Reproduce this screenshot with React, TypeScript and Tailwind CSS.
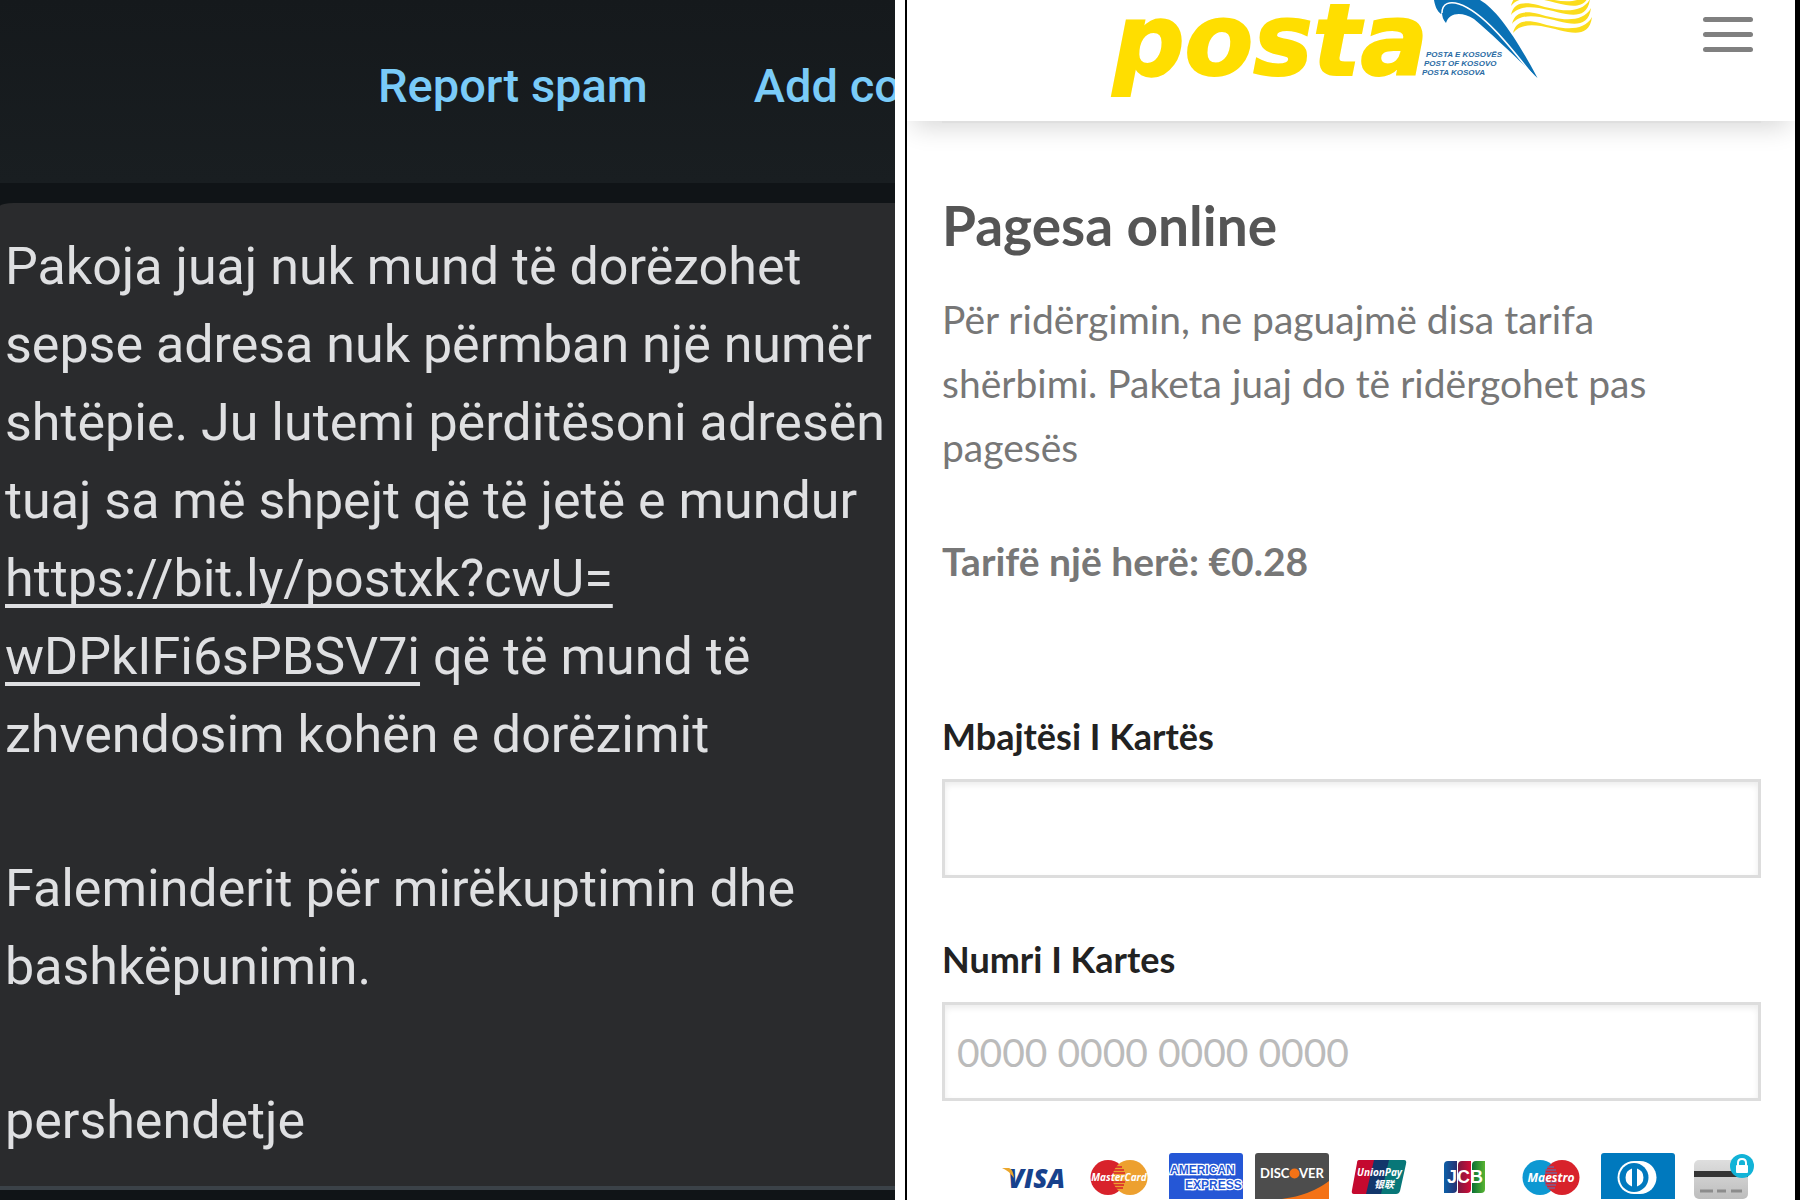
import type { ReactNode } from "react";

const lato = "font-['Lato',sans-serif]";

function PostaLogo() {
  const stripe =
    "M434 33C437 20 447 20 461 23C478 28 504 34 513 17C511 33 500 34 489 32C472 29 446 18 434 33Z";
  return (
    <svg viewBox="28 0 488 98" className="h-[98px] w-[488px]" role="img" aria-label="Posta e Kosovës">
      <text x="34" y="75" fontFamily="DejaVu Sans" fontSize="100" fontWeight="700" fontStyle="italic" fill="#ffde00" stroke="#ffde00" strokeWidth="2">
        posta
      </text>
      <g fontFamily="Liberation Sans" fontSize="8" fontWeight="700" fontStyle="italic" fill="#2a6ba3">
        <text x="347" y="57">POSTA E KOSOVËS</text>
        <text x="345" y="66">POST OF KOSOVO</text>
        <text x="343" y="75">POSTA KOSOVA</text>
      </g>
      <path d="M355 0H401C418 10 436 36 458.500 78C444 64 415 36 395 19C382 11 370 13 367 23C364 20 363 16 363 12L362 14C358 11 356 6 355 0Z" fill="#0a71b5" />
      <path d="M363 13C363 3 371 1 380 4C404 12 430 45 456 78" fill="none" stroke="#fff" strokeWidth="1.500" />
      <g fill="#fbdc1c">
        <path d={stripe} />
        <path d={stripe} transform="translate(-1 -9)" />
        <path d={stripe} transform="translate(-2 -18)" />
        <path d={stripe} transform="translate(-2 -27)" />
      </g>
    </svg>
  );
}

function Badge({ label, children }: { label: string; children: ReactNode }) {
  return (
    <li>
      <svg viewBox="0 0 74 46" className="block h-[46px] w-[74px]" role="img" aria-label={label}>
        {children}
      </svg>
    </li>
  );
}

function CardBadges() {
  const humanist = "Open Sans";
  return (
    <ul className="ml-auto flex w-[765px] max-w-full justify-between">
      <Badge label="Visa">
        <text x="12" y="35" fontFamily={humanist} fontSize="26" fontWeight="800" fontStyle="italic" fill="#17418c">VISA</text>
        <path d="M6 15H13Q17 16 18 25Q12 17 6 15Z" fill="#eba72c" />
      </Badge>
      <Badge label="MasterCard">
        <circle cx="26" cy="24.500" r="17.500" fill="#d8222b" />
        <circle cx="48" cy="24.500" r="17.500" fill="#eda02f" />
        <path d="M32 14H40M31 17H42M31 20H43M31 29H43M31 32H42M33 35H41" stroke="#d8222b" strokeWidth="1.500" />
        <text x="37" y="28" textAnchor="middle" fontFamily={humanist} fontSize="10" fontWeight="700" fontStyle="italic" fill="#fff">MasterCard</text>
      </Badge>
      <Badge label="American Express">
        <rect width="74" height="52" rx="3" fill="#2557d6" />
        <g fontFamily="Liberation Sans" fontSize="12" fontWeight="700" fill="#2557d6" stroke="#fff" strokeWidth="2.500" paintOrder="stroke">
          <text x="1" y="21">AMERICAN</text>
          <text x="16" y="36">EXPRESS</text>
        </g>
      </Badge>
      <Badge label="Discover">
        <rect width="74" height="52" rx="3" fill="#4d4d4d" />
        <path d="M74 28Q56 42 27 46H74Z" fill="#f47216" />
        <circle cx="39.500" cy="20.500" r="5" fill="#f47216" />
        <g fontFamily="Lato" fontSize="13" fontWeight="700" fill="#fff">
          <text x="5" y="25">DISC</text>
          <text x="44" y="25">VER</text>
        </g>
      </Badge>
      <Badge label="UnionPay">
        <path d="M17 7H34L25 41H12Q9 41 10 37L15 10Q15 7 17 7Z" fill="#c4092f" />
        <path d="M32 7H49L41 41H24Z" fill="#12366b" />
        <path d="M47 7H62Q65 7 64 11L58 38Q57 41 54 41H39Z" fill="#087778" />
        <g fontStyle="italic" fontWeight="700" fill="#fff">
          <text x="15" y="23" fontSize="10" fontFamily="Noto Sans">UnionPay</text>
          <text x="32" y="35" fontSize="10" fontFamily="Noto Sans CJK SC">银联</text>
        </g>
      </Badge>
      <Badge label="JCB">
        <defs>
          <linearGradient id="jcbBlue"><stop stopColor="#0c60a8" /><stop offset="1" stopColor="#263071" /></linearGradient>
          <linearGradient id="jcbRed"><stop stopColor="#7a1941" /><stop offset="1" stopColor="#d20c36" /></linearGradient>
          <linearGradient id="jcbGreen"><stop stopColor="#0a6f36" /><stop offset="1" stopColor="#59b531" /></linearGradient>
        </defs>
        <path d="M20 8H29V36Q29 40 25 40H16V12Q16 8 20 8Z" fill="url(#jcbBlue)" />
        <path d="M34 8H43V36Q43 40 39 40H30V12Q30 8 34 8Z" fill="url(#jcbRed)" />
        <path d="M48 8H57V36Q57 40 53 40H44V12Q44 8 48 8Z" fill="url(#jcbGreen)" />
        <text x="37" y="30" textAnchor="middle" fontFamily="Liberation Sans" fontSize="18" fontWeight="700" fill="#fff">JCB</text>
      </Badge>
      <Badge label="Maestro">
        <circle cx="26" cy="24.500" r="17.500" fill="#0d98d2" />
        <circle cx="48" cy="24.500" r="17.500" fill="#d8222b" />
        <path d="M33 14H40M31 17H42M31 20H43M31 29H43M31 32H42M33 35H41" stroke="#7b5f91" strokeWidth="1.500" />
        <text x="37" y="29" textAnchor="middle" fontFamily={humanist} fontSize="12" fontWeight="700" fontStyle="italic" fill="#fff">Maestro</text>
      </Badge>
      <Badge label="Diners Club">
        <rect width="74" height="52" rx="3" fill="#0079be" />
        <path d="M33 8H39A16.500 16.500 0 0 1 39 41H33A16.500 16.500 0 0 1 33 8Z" fill="#fff" />
        <circle cx="33" cy="24.500" r="14.500" fill="#0079be" />
        <path d="M31 15.500A9.500 9.500 0 0 0 31 33.500ZM36 15.500A9.500 9.500 0 0 1 36 33.500Z" fill="#fff" />
      </Badge>
      <Badge label="Secure card">
        <defs>
          <linearGradient id="cardGrey" x2="0" y2="1"><stop stopColor="#dedede" /><stop offset="1" stopColor="#bdbdbd" /></linearGradient>
        </defs>
        <rect x="7" y="7" width="54" height="39" rx="5" fill="url(#cardGrey)" />
        <path d="M7 18H61V24H7Z" fill="#353535" />
        <path d="M13 38H26M30 38H39M44 38H55" stroke="#8c8c8c" strokeWidth="3" />
        <circle cx="55" cy="13" r="12" fill="#12b3d7" />
        <rect x="49" y="12" width="12" height="8" rx="1" fill="#fff" />
        <path d="M51 13V10Q51 6 55 6T59 10V13" fill="none" stroke="#fff" strokeWidth="2" />
      </Badge>
    </ul>
  );
}

function MessagePane() {
  return (
    <section className="flex min-w-0 flex-col overflow-hidden bg-[#101417] font-['Roboto',sans-serif]">
      <div className="flex h-[183px] shrink-0 items-start gap-[106px] bg-linear-to-b from-[#15191c] to-[#191e21] pt-[54px] pl-[378px] text-[47px] leading-[64px] font-medium text-[#7acbf8]">
        <button type="button" className="whitespace-nowrap">Report spam</button>
        <button type="button" className="whitespace-nowrap">Add contact</button>
      </div>
      <div className="mt-5 flex h-[987px] shrink-0 flex-col rounded-tl-[14px_3px] border-b-4 border-[#3b4248] bg-[#2a2b2d] pt-[25px] pl-[5px] text-[52px] leading-[78px] whitespace-nowrap text-[#dfe0e2]">
        <p>
          Pakoja juaj nuk mund të dorëzohet<br />
          sepse adresa nuk përmban një numër<br />
          shtëpie. Ju lutemi përditësoni adresën<br />
          tuaj sa më shpejt që të jetë e mundur<br />
          <a href="#postxk" className="underline decoration-4 underline-offset-8 [text-decoration-skip-ink:none]">
            https://bit.ly/postxk?cwU=<br />
            wDPkIFi6sPBSV7i
          </a>{" "}
          që të mund të<br />
          zhvendosim kohën e dorëzimit
        </p>
        <p className="mt-[76px]">
          Faleminderit për mirëkuptimin dhe<br />
          bashkëpunimin.
        </p>
        <p className="mt-[76px]">pershendetje</p>
      </div>
    </section>
  );
}

function PaymentPane() {
  const field =
    "mt-[15px] block h-[99px] w-full border-3 border-[#dddddd] bg-white px-3 text-[39px] text-[#555] shadow-[inset_0_3px_6px_rgba(0,0,0,0.08)] outline-none placeholder:text-[#bbbbbb]";
  const label = "block text-[36px] leading-[56px] font-bold text-[#222222]";
  return (
    <section className={`min-w-0 overflow-hidden border-r-5 border-l-2 border-black bg-white ${lato}`}>
      <header className="grid h-[121px] grid-cols-[1fr_auto_1fr] items-start px-[42px] shadow-[0_12px_24px_-6px_rgba(0,0,0,0.16)]">
        <span />
        <PostaLogo />
        <button type="button" aria-label="Menu" className="mt-[17px] flex flex-col gap-[10px] justify-self-end">
          <span className="h-[5px] w-[50px] rounded-full bg-[#808080]" />
          <span className="h-[5px] w-[50px] rounded-full bg-[#808080]" />
          <span className="h-[5px] w-[50px] rounded-full bg-[#808080]" />
        </button>
      </header>
      <main className="pr-[34px] pl-[35px]">
        <hr className="border-t-2 border-[#dfdfdf]" />
        <h1 className="mt-[66px] text-[55px] leading-[72px] font-bold text-[#555555]">Pagesa online</h1>
        <p className="mt-[26px] text-[39px] leading-[64px] text-[#777777]">
          Për ridërgimin, ne paguajmë disa tarifa<br />
          shërbimi. Paketa juaj do të ridërgohet pas<br />
          pagesës
        </p>
        <p className="mt-[50px] text-[39px] leading-[64px] font-bold text-[#777777]">Tarifë një herë: €0.28</p>
        <form className="mt-[115px]">
          <label htmlFor="holder" className={label}>Mbajtësi I Kartës</label>
          <input id="holder" className={field} />
          <label htmlFor="number" className={`mt-[53px] ${label}`}>Numri I Kartes</label>
          <input id="number" placeholder="0000 0000 0000 0000" className={field} />
        </form>
        <div className="mt-[52px]">
          <CardBadges />
        </div>
      </main>
    </section>
  );
}

export default function App() {
  return (
    <div className="grid h-screen grid-cols-[minmax(0,1fr)_minmax(0,1fr)] gap-[10px] overflow-hidden bg-white">
      <MessagePane />
      <PaymentPane />
    </div>
  );
}
